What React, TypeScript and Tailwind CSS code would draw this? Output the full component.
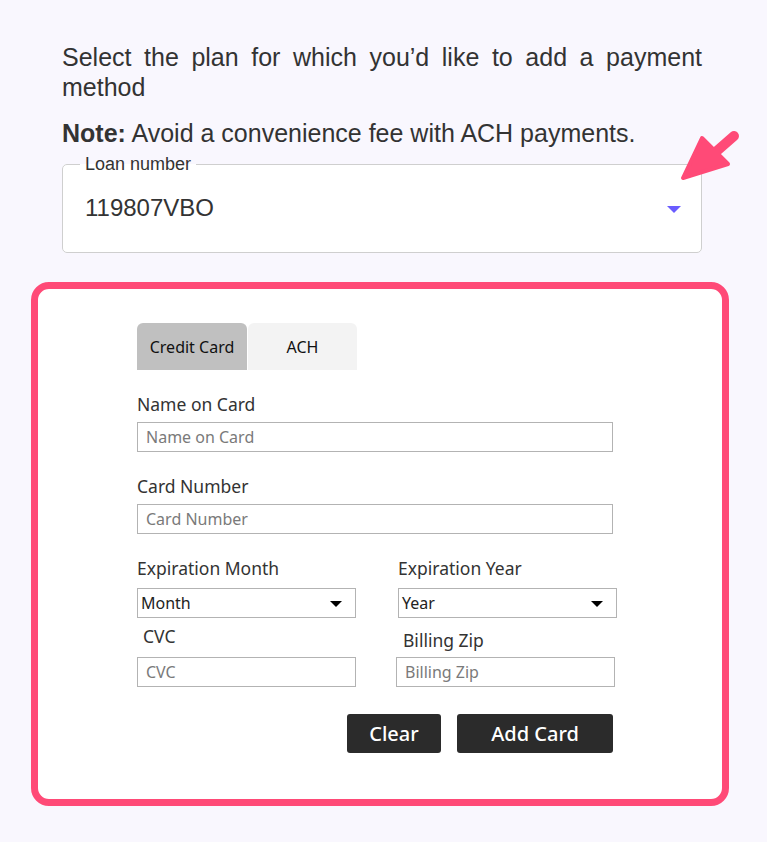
import { useState } from "react";

const fieldInput =
  "block h-[30px] w-full border border-[#b3b3b3] bg-white px-[8px] text-[16px] text-[#333] placeholder:text-[#7a7a7a] outline-none";

function Label({ children, className = "" }: { children: React.ReactNode; className?: string }) {
  return <div className={`h-[24px] text-[17.5px] leading-[24px] text-[#333] ${className}`}>{children}</div>;
}

function FakeSelect({ value }: { value: string }) {
  return (
    <div className="relative flex h-[30px] w-full items-center border border-[#b3b3b3] bg-white pl-[3px] text-[16px] text-[#222]">
      {value}
      <span className="absolute right-[13px] top-[12px] h-0 w-0 border-x-[6px] border-t-[6px] border-x-transparent border-t-black" />
    </div>
  );
}

export default function App() {
  const [tab, setTab] = useState("card");

  return (
    <main className="relative min-h-[842px] w-[767px] bg-[#f9f7fe] pt-[42px]">
      <div className="pl-[62px] pr-[65px] font-['Liberation_Sans',Arial,sans-serif] text-[#333]">
        <p className="text-justify text-[25px] leading-[30px] [text-align-last:left]">
          Select the plan for which you’d like to add a payment method
        </p>
        <p className="mt-[16px] text-[25px] leading-[30px]">
          <b>Note:</b> Avoid a convenience fee with ACH payments.
        </p>

        <fieldset className="mt-[6px] h-[99px] rounded-[5px] border border-[#cfcfcf] bg-white pl-[22px] pr-[20px]">
          <legend className="ml-[-5px] px-[5px] text-[18px] leading-[20px] text-[#333]">Loan number</legend>
          <div className="flex items-center justify-between pt-[19px]">
            <span className="text-[24px] leading-[30px] text-[#333]">119807VBO</span>
            <span className="mt-[2px] h-0 w-0 border-x-[7px] border-t-[7px] border-x-transparent border-t-[#6a5cff]" />
          </div>
        </fieldset>
      </div>

      <svg className="absolute left-[676px] top-[126px]" width="66" height="60" viewBox="0 0 66 60">
        <line x1="58" y1="10" x2="34" y2="31" stroke="#ff4a77" strokeWidth="10" strokeLinecap="round" />
        <path d="M26 12 L52 38 L7 52 Z" fill="#ff4a77" stroke="#ff4a77" strokeWidth="4" strokeLinejoin="round" />
      </svg>

      <div className="ml-[31px] mt-[29px] h-[524px] w-[698px] rounded-[18px] border-[7px] border-[#ff4a77] bg-white pl-[99px] pt-[34px] font-['Noto_Sans',sans-serif]">
        <div className="flex">
          <button
            onClick={() => setTab("card")}
            className={`h-[47px] w-[110px] rounded-t-[6px] text-[16px] text-[#111] ${tab === "card" ? "bg-[#c0c0c0]" : "bg-[#f3f3f3]"}`}
          >
            Credit Card
          </button>
          <button
            onClick={() => setTab("ach")}
            className={`ml-px h-[47px] w-[109px] rounded-t-[6px] text-[16px] text-[#111] ${tab === "ach" ? "bg-[#c0c0c0]" : "bg-[#f3f3f3]"}`}
          >
            ACH
          </button>
        </div>

        <div className="w-[476px]">
          <Label className="mt-[22px]">Name on Card</Label>
          <input className={`mt-[6px] ${fieldInput}`} placeholder="Name on Card" />

          <Label className="mt-[22px]">Card Number</Label>
          <input className={`mt-[6px] ${fieldInput}`} placeholder="Card Number" />

          <div className="mt-[22px] grid grid-cols-[219px_219px] gap-x-[42px]">
            <div>
              <Label>Expiration Month</Label>
              <div className="mt-[8px]">
                <FakeSelect value="Month" />
              </div>
              <Label className="ml-[6px] mt-[6px]">CVC</Label>
              <input className={`mt-[9px] ${fieldInput}`} placeholder="CVC" />
            </div>
            <div>
              <Label>Expiration Year</Label>
              <div className="mt-[8px]">
                <FakeSelect value="Year" />
              </div>
              <Label className="ml-[5px] mt-[10px]">Billing Zip</Label>
              <input className={`-ml-[2px] mt-[5px] ${fieldInput}`} placeholder="Billing Zip" />
            </div>
          </div>

          <div className="mt-[27px] flex justify-end gap-[16px]">
            <button className="h-[39px] w-[94px] rounded-[3px] bg-[#2b2b2b] text-[20px] font-medium text-white">
              Clear
            </button>
            <button className="h-[39px] w-[156px] rounded-[3px] bg-[#2b2b2b] text-[20px] font-medium text-white">
              Add Card
            </button>
          </div>
        </div>
      </div>
    </main>
  );
}
